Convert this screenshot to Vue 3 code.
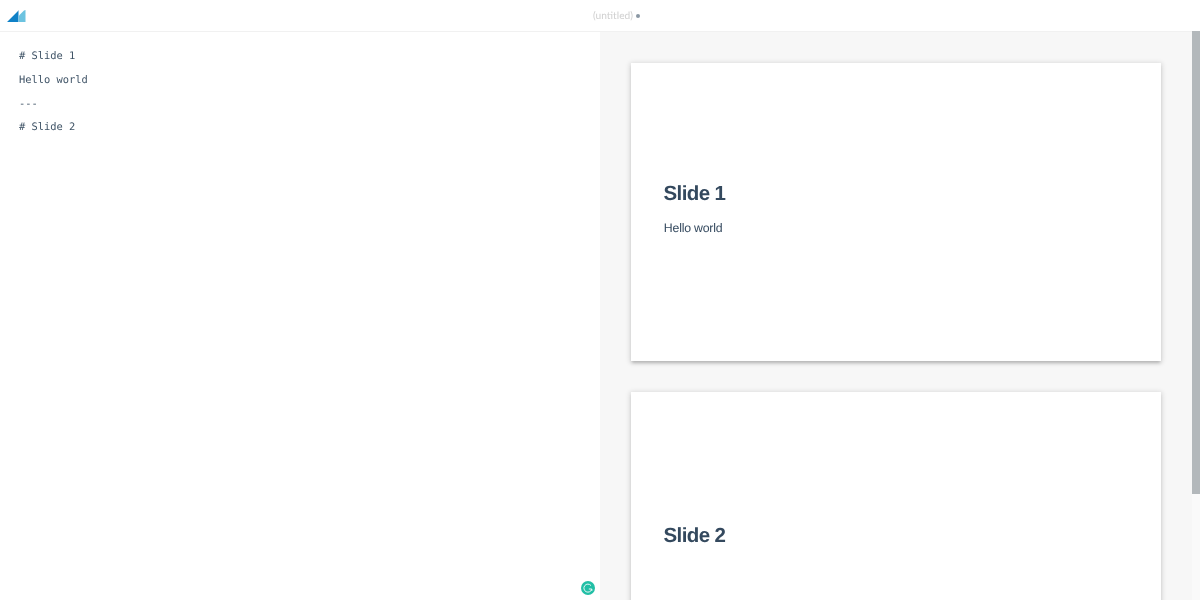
<script setup>
const slides = [
  { title: 'Slide 1', body: 'Hello world' },
  { title: 'Slide 2', body: '' },
]
const source = ['# Slide 1', 'Hello world', '---', '# Slide 2']
</script>

<template>
  <div class="app">
    <header class="topbar">
      <svg class="logo" width="19" height="12" viewBox="0 0 19 12">
        <polygon points="0,12 11,1 11.5,0 11.5,12" fill="#0f81c7" />
        <polygon points="12,12 12,5.5 17,0.5 18.5,0 18.5,12" fill="#6cc3e0" />
      </svg>
      <div class="filename">
        <span class="name">(untitled)</span>
        <span class="dot"></span>
      </div>
    </header>
    <main class="workspace">
      <section class="editor">
        <div v-for="line in source" :key="line" class="line">{{ line }}</div>
        <span class="grammarly">
          <svg width="14" height="14" viewBox="0 0 14 14">
            <circle cx="7" cy="7" r="7" fill="#22bfa6" />
            <path d="M10 4.6A4 4 0 1 0 10.8 8H7.8" fill="none" stroke="#e8f8f5" stroke-width="1" />
            <path d="M10.8 8v2" fill="none" stroke="#e8f8f5" stroke-width="1" />
          </svg>
        </span>
      </section>
      <section class="preview">
        <div class="slides">
          <article v-for="s in slides" :key="s.title" class="slide">
            <h1>{{ s.title }}</h1>
            <p v-if="s.body">{{ s.body }}</p>
          </article>
        </div>
        <div class="scrollbar"><div class="thumb"></div></div>
      </section>
    </main>
  </div>
</template>

<style>
html, body { margin: 0; height: 100%; overflow: hidden; background: #fff; }
</style>

<style scoped>
.app {
  width: 1200px;
  height: 600px;
  display: flex;
  flex-direction: column;
  overflow: hidden;
  font-family: "Liberation Sans", Arial, sans-serif;
  text-rendering: geometricPrecision;
  will-change: transform;
}
.topbar {
  height: 31px;
  flex: none;
  position: relative;
  display: flex;
  align-items: center;
  justify-content: center;
  border-bottom: 1px solid #f1f1f1;
  background: #fff;
}
.logo {
  position: absolute;
  left: 7px;
  top: 10px;
}
.filename {
  display: flex;
  align-items: center;
  gap: 3px;
  margin-left: 33px;
  padding-top: 1px;
  font-family: "Lato", sans-serif;
  font-size: 10.2px;
  color: #d0d0d0;
}
.dot {
  width: 4px;
  height: 4px;
  border-radius: 50%;
  background: #8a97a3;
}
.workspace {
  flex: 1;
  min-height: 0;
  display: flex;
}
.editor {
  width: 600px;
  flex: none;
  position: relative;
  box-sizing: border-box;
  padding: 13.3px 19px;
  font-family: "DejaVu Sans Mono", monospace;
  font-size: 10.4px;
  line-height: 23.7px;
  color: #3f5366;
  background: #fff;
}
.grammarly {
  position: absolute;
  left: 581px;
  top: 549px;
  display: block;
  width: 14px;
  height: 14px;
}
.grammarly svg { display: block; }
.preview {
  flex: 1;
  min-width: 0;
  display: flex;
  background: #f7f7f7;
}
.slides {
  flex: 1;
  min-width: 0;
  padding: 31px 31px 0;
  display: flex;
  flex-direction: column;
  gap: 31px;
}
.slide {
  height: 298px;
  flex: none;
  box-sizing: border-box;
  padding: 0 33px;
  display: flex;
  flex-direction: column;
  justify-content: center;
  background: #fff;
  color: #34495e;
  box-shadow: 0 1px 5px 1px rgba(0, 0, 0, 0.14), 0 3px 3px -1px rgba(0, 0, 0, 0.18);
}
.slide h1 {
  margin: 0 0 11px -0.5px;
  font-size: 20.5px;
  line-height: 21px;
  font-weight: 700;
  letter-spacing: -0.6px;
}
.slide p {
  margin: 0 0 0 -0.2px;
  font-size: 12.3px;
  line-height: 26px;
  letter-spacing: -0.2px;
}
.scrollbar {
  width: 8px;
  flex: none;
  background: #fafafa;
  box-sizing: border-box;
}
.thumb {
  position: relative;
  margin-top: -1px;
  height: 463px;
  background: #b3b8bb;
}
</style>
